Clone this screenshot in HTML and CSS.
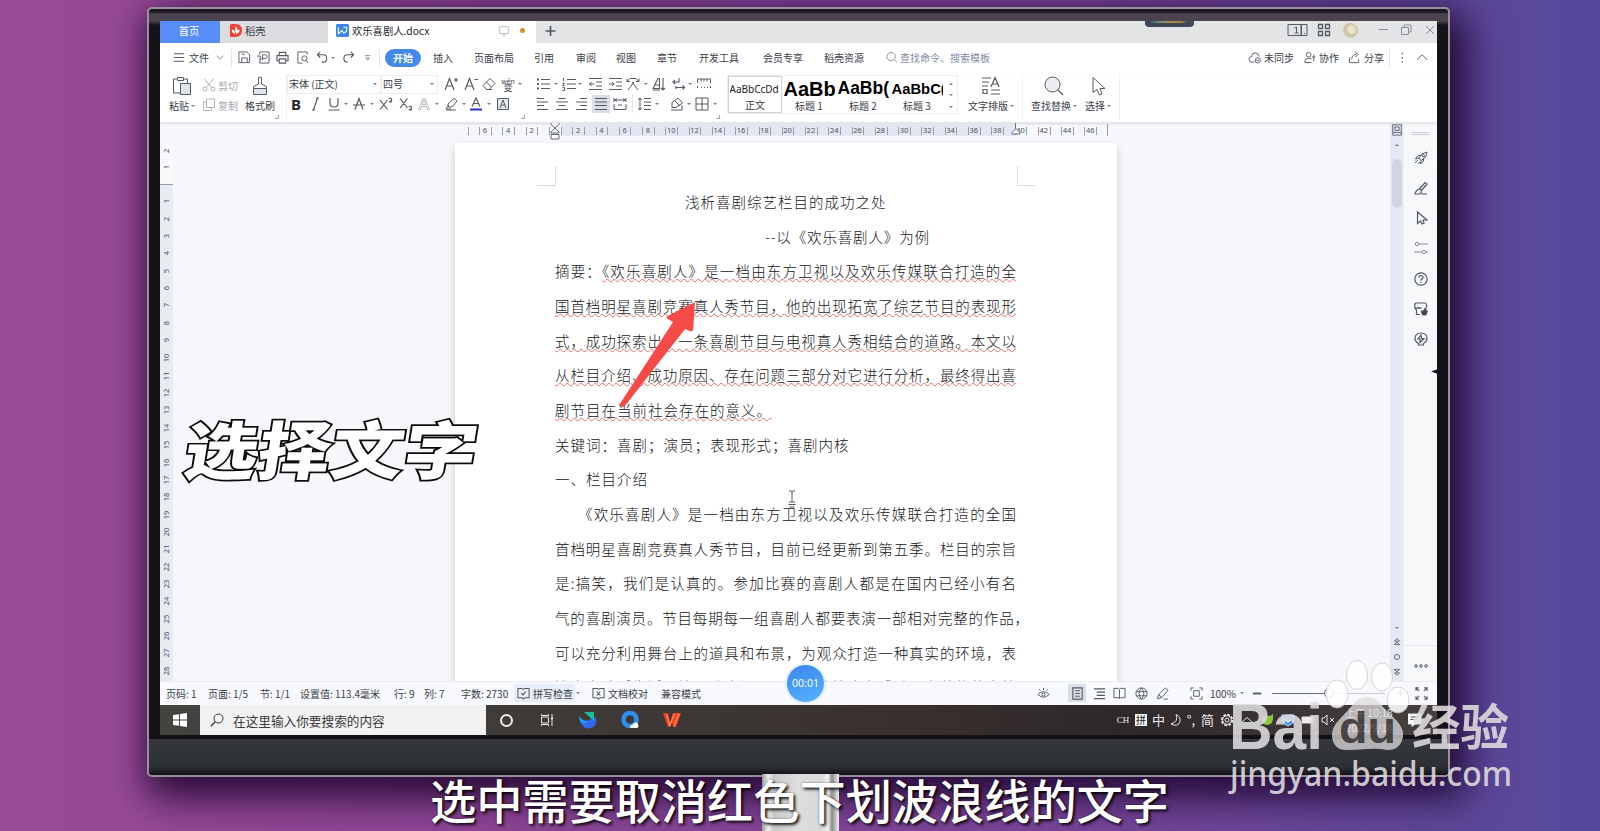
FILE: index.html
```html
<!DOCTYPE html>
<html lang="zh-CN">
<head>
    <meta charset="UTF-8">
    <meta name="viewport" content="width=device-width, initial-scale=1.0">
    <title>欢乐喜剧人.docx</title>
    <link rel="stylesheet" href="styles.css">
</head>
<body>
<div class="stage">
    <div class="stand"></div>

    <div class="monitor">
        <div class="screen">

            <!-- Tabs -->
            <div class="tabs">
                <div class="tab home">首页</div>
                <div class="tab docer">
                    <svg class="logo" viewBox="0 0 14 14"><path d="M1 2q0-2 2-2h4q7 0 7 7t-7 7H3q-2 0-2-2z" fill="#ee4138"/><path d="M7.500 2.500q3 3 0 6.500q-2-3 0-6.500zM3 6q3 0 4 4.500q-4 0-4-4.500zM11.500 6q0 4-4 4.500q0-4 4-4.500z" fill="#fff"/></svg>
                    <span>稻壳</span>
                </div>
                <div class="tab doc">
                    <svg class="logo" viewBox="0 0 14 14"><rect width="14" height="14" rx="1.500" fill="#3d86e8"/><path d="M2.500 3.500v7l4-3.500 2 3 3-2.500v-4H8" fill="none" stroke="#fff" stroke-width="1.100"/></svg>
                    <span>欢乐喜剧人.docx</span>
                    <svg class="i pale screen-ico" viewBox="0 0 14 14"><path d="M2 2h10v8H2zM5 13l2-2.500L9 13"/></svg>
                    <i class="dot"></i>
                </div>
                <svg class="i plus" viewBox="0 0 14 14"><path d="M7 2v10M2 7h10" stroke-width="1.700"/></svg>
                <div class="win-buttons">
                    <svg class="i wide" viewBox="0 0 20 14"><path d="M.500 1.500h13v11H.500zM14 1.500h5.500v11H14zM7 5l2-1v6M7 10h4M16.500 10.500h1"/></svg>
                    <svg class="i" viewBox="0 0 14 14"><path d="M1.500 1.500h4v4h-4zM8.500 1.500h4v4h-4zM1.500 8.500h4v4h-4zM8.500 8.500h4v4h-4z" stroke-width="1.300"/></svg>
                    <i class="avatar"></i>
                    <i class="sep"></i>
                    <svg class="i grey" viewBox="0 0 14 14"><path d="M3 6.500h9"/></svg>
                    <svg class="i grey" viewBox="0 0 14 14"><path d="M2.500 4.500h7v7h-7zM5 4.500v-2.500h7v7H9.500"/></svg>
                    <svg class="i grey" viewBox="0 0 14 14"><path d="M3 3l8 8M11 3l-8 8"/></svg>
                </div>
                <div class="recorder"></div>
            </div>

            <!-- Menu -->
            <div class="menu">
                <svg class="i" viewBox="0 0 14 14"><path d="M1 3h11M1 7h11M1 11h11" stroke-width="1.200"/></svg>
                <span>文件</span>
                <svg class="i grey" viewBox="0 0 14 14"><path d="M1 5l3.500 4L8 5"/></svg>
                <i class="sep"></i>
                <svg class="i" viewBox="0 0 14 14"><path d="M1 1h8.500l3 3v8.500H1zM4 12.500v-5h6v5M4 3.500h3.500"/></svg>
                <svg class="i" viewBox="0 0 14 14"><path d="M3 4V1h10v12H3v-3M6 10V4h3q2 0 2 2t-2 2H6M0 5.500h3.500v4M2 8l1.500 1.500L5 8"/></svg>
                <svg class="i" viewBox="0 0 14 14"><path d="M3.500 5V1.500h7V5M3 10.500H1V5h12v5.500h-2M3.500 8.500h7v4.500h-7z" stroke-width="1.200"/></svg>
                <svg class="i" viewBox="0 0 14 14"><path d="M12 4V1H2v12h5"/><circle cx="9" cy="8" r="2.800"/><path d="M10.800 10l2.400 3"/></svg>
                <svg class="i" viewBox="0 0 14 14"><path d="M4.500 1L1.500 4l3 3M1.500 4H8q3.500 0 3.500 4T8 12H6" stroke-width="1.200"/></svg>
                <i class="caret"></i>
                <svg class="i" viewBox="0 0 14 14"><path d="M9.500 1l3 3-3 3M12.500 4H6q-4 0-4 4t4 4" stroke-width="1.200"/></svg>
                <svg class="i grey" viewBox="0 0 14 14"><path d="M3 5h6M4 7.500h4l-2 2.500z"/></svg>
                <i class="sep"></i>
                <b class="pill">开始</b>
                <span>插入</span>
                <span>页面布局</span>
                <span>引用</span>
                <span>审阅</span>
                <span>视图</span>
                <span>章节</span>
                <span>开发工具</span>
                <span>会员专享</span>
                <span>稻壳资源</span>
                <svg class="i grey" viewBox="0 0 14 14"><circle cx="5.500" cy="6" r="4.500"/><path d="M9 9.500l3 3"/></svg>
                <span class="hint">查找命令、搜索模板</span>
                <svg class="i" viewBox="0 0 14 14"><path d="M7 12H4Q1 12 1 9t3-3q0-4 4-4 3.500 0 4 4"/><circle cx="10.500" cy="10" r="2.800"/><path d="M9 10h3"/></svg>
                <span>未同步</span>
                <svg class="i" viewBox="0 0 14 14"><circle cx="5" cy="4" r="2.500"/><path d="M8 12.500H1V11q0-3 4-3 1.500 0 3 .500M10.500 4v7M8.500 6.500h4"/></svg>
                <span>协作</span>
                <svg class="i" viewBox="0 0 14 14"><path d="M1.500 7v5.500h10V9M4 9q0-5 5-5.500M7.500 1L11 3.500 8 6.500"/></svg>
                <span>分享</span>
                <i class="sep"></i>
                <svg class="i" viewBox="0 0 14 14"><path d="M2.500 2v1.500M2.500 6.500V8M2.500 11v1.500" stroke-width="1.400"/></svg>
                <svg class="i" viewBox="0 0 14 14"><path d="M0 9.500L5.500 4 11 9.500"/></svg>
            </div>

            <!-- Ribbon -->
            <div class="ribbon">
                <div class="group clip">
                    <div class="big">
                        <svg viewBox="0 0 20 20"><path d="M5 3H1.500v14H8M12 3h3.500v4M5.500 1.500h6v3h-6z"/><path d="M8.500 7.500h10v11h-10z" fill="#dfe3eb"/></svg>
                        <span>粘贴<i class="caret"></i></span>
                    </div>
                    <div class="pair off">
                        <span><svg class="i" viewBox="0 0 14 14"><circle cx="3" cy="11" r="2"/><circle cx="11" cy="11" r="2"/><path d="M2.500 1l7 8.500M11.500 1l-7 8.500"/></svg>剪切</span>
                        <span><svg class="i" viewBox="0 0 14 14"><path d="M4.500 1h8v8.500h-8zM4.500 4H1.500v8.500h8V10"/></svg>复制</span>
                    </div>
                    <div class="big">
                        <svg viewBox="0 0 20 20"><path d="M8.500 8V1.500q1.500-1 3 0V8l5 2.500v2h-13v-2z"/><path d="M3.500 12.500h13v6h-13z" fill="#dfe3eb"/></svg>
                        <span>格式刷</span>
                    </div>
                    <i class="corner"></i>
                </div>

                <div class="group font">
                    <div class="row font-a">
                        <div class="select">宋体 (正文)<i class="caret"></i></div>
                        <div class="select">四号<i class="caret"></i></div>
                        <svg class="i" viewBox="0 0 14 14"><path d="M1 13L5.500 1.500 10 13M2.500 9h6M10 3h4M12 1v4" stroke-width="1.200"/></svg>
                        <svg class="i" viewBox="0 0 14 14"><path d="M1 13L5.500 1.500 10 13M2.500 9h6M10.500 2.500h3.500" stroke-width="1.200"/></svg>
                        <svg class="i" viewBox="0 0 14 14"><path d="M1 8.500L8 1.500l5 5-6 6H4.500zM4.500 5l5 5M4 12.500h6"/></svg>
                        <div class="pinyin"><small>wén</small>变</div>
                        <i class="caret"></i>
                    </div>
                    <div class="row font-b">
                        <b class="letter">B</b>
                        <svg class="i" viewBox="0 0 14 14"><path d="M8 1h3M4 13h3M9.500 1l-4 12" stroke-width="1.200"/></svg>
                        <svg class="i" viewBox="0 0 14 14"><path d="M3 1v5q0 4 4 4t4-4V1M1.500 13h11" stroke-width="1.200"/></svg>
                        <i class="caret"></i>
                        <svg class="i" viewBox="0 0 14 14"><path d="M3 12.500L7 1.500l4 11M1 8h12" stroke-width="1.200"/></svg>
                        <i class="caret"></i>
                        <svg class="i" viewBox="0 0 14 14"><path d="M1 3l7.500 9.500M8.500 3L1 12.500M10 2q1.500-1.500 2.500 0t-2.500 3h3" stroke-width="1.200"/></svg>
                        <svg class="i" viewBox="0 0 14 14"><path d="M1 1.500L8.500 11M8.500 1.500L1 11M10 10q1.500-1.500 2.500 0t-2.500 3h3" stroke-width="1.200"/></svg>
                        <svg class="i pale" viewBox="0 0 14 14"><path d="M1.500 12.500L6 1.500h2l4.500 11h-2l-1-3H4.500l-1 3zM5 7.500h4L7 3.500z"/></svg>
                        <i class="caret"></i>
                        <svg class="i" viewBox="0 0 14 14"><path d="M4 7l6-5.500L13 4 8 10H4.500zM4.500 8L2 12h5M2 13h10" /></svg>
                        <i class="caret"></i>
                        <svg class="i" viewBox="0 0 14 14"><path d="M3 9.500L7 1l4 8.500M4.500 6.500h5" stroke-width="1.200"/><path d="M1 12.500h12" stroke="#2b2fc4" stroke-width="2"/></svg>
                        <i class="caret"></i>
                        <svg class="i" viewBox="0 0 14 14"><path d="M1.500 1.500h11v11h-11z" fill="#e4e7ec"/><path d="M4 11l3-8 3 8M5 8h4"/></svg>
                    </div>
                    <i class="corner"></i>
                </div>

                <div class="group para">
                    <div class="row para-a">
                        <svg class="i" viewBox="0 0 14 14"><path d="M5 2.500h9M5 7h9M5 11.500h9"/><path d="M1 2.500h2M1 7h2M1 11.500h2" stroke-width="2"/></svg>
                        <i class="caret"></i>
                        <svg class="i" viewBox="0 0 14 14"><path d="M5 2.500h9M5 7h9M5 11.500h9M1.500 1v3M.500 6h2l-2 2.500h2M.500 10.500h2v3h-2"/></svg>
                        <i class="caret"></i>
                        <svg class="i" viewBox="0 0 14 14"><path d="M1 1.500h13M8 5h6M8 9h6M1 12.500h13M6.500 7H1M3.500 5l-2 2 2 2"/></svg>
                        <svg class="i" viewBox="0 0 14 14"><path d="M1 1.500h13M8 5h6M8 9h6M1 12.500h13M1 7h5.500M4 5l2 2-2 2"/></svg>
                        <svg class="i" viewBox="0 0 14 14"><path d="M2 13l6-8M12 13L6 5M1 1.500v3h3M1 4.500L4 1.500h6l3 3M13 1.500v3h-3"/></svg>
                        <i class="caret"></i>
                        <svg class="i" viewBox="0 0 14 14"><path d="M1 11.500L6 1.500h1.500v10zM3 8h4M1 13h7M11 1v12M9 11l2 2 2-2" stroke-width="1.100"/></svg>
                        <svg class="i" viewBox="0 0 14 14"><path d="M7 1v4H1M3 3L1 5l2 2M4 10.500h8.500M10.500 8.500l2 2-2 2M4 9v3" stroke-width="1.100"/></svg>
                        <i class="caret"></i>
                        <svg class="i" viewBox="0 0 14 14"><path d="M.500 6V2h13v4M4 2v2.500M7 2v2.500M10 2v2.500M.500 9v2M13.500 9v2M4 10.500h1M7 10.500h1M10 10.500h1"/></svg>
                    </div>
                    <div class="row para-b">
                        <svg class="i" viewBox="0 0 14 14"><path d="M1 1.500h7M1 5h11M1 8.500h7M1 12.500h11"/></svg>
                        <svg class="i" viewBox="0 0 14 14"><path d="M3.500 1.500h7M1 5h12M3.500 8.500h7M1 12.500h12"/></svg>
                        <svg class="i" viewBox="0 0 14 14"><path d="M6 1.500h7M2 5h11M6 8.500h7M2 12.500h11"/></svg>
                        <div class="on"><svg class="i" viewBox="0 0 14 14"><path d="M1 1.500h12M1 5h12M1 8.500h12M1 12.500h12" stroke-width="1.200"/></svg></div>
                        <svg class="i" viewBox="0 0 14 14"><path d="M1 1v4M13 1v4M1 3h12M4 1.500L2 3l2 1.500M10 1.500L12 3l-2 1.500M1 7v5.500h12V7M5 8h4"/></svg>
                        <i class="sep"></i>
                        <svg class="i" viewBox="0 0 14 14"><path d="M3 1v12M1 3l2-2 2 2M1 11l2 2 2-2M7 1.500h7M7 5h7M7 8.500h7M7 12.500h7"/></svg>
                        <i class="caret"></i>
                        <i></i>
                        <svg class="i" viewBox="0 0 14 14"><path d="M2 5.500L8 1l4.500 5L6 10.500H2zM12 8v4M1 13h12M5 4l5 5"/></svg>
                        <i class="caret"></i>
                        <svg class="i" viewBox="0 0 14 14"><path d="M1 1h12v12H1zM7 1v12M1 7h12"/></svg>
                        <i class="caret"></i>
                    </div>
                    <i class="corner"></i>
                </div>

                <div class="styles">
                    <div class="style current"><em>AaBbCcDd</em><span>正文</span></div>
                    <div class="style h1"><em>AaBb</em><span>标题 1</span></div>
                    <div class="style h2"><em>AaBb(</em><span>标题 2</span></div>
                    <div class="style h3"><em>AaBbC(</em><span>标题 3</span></div>
                    <div class="arrows"><i class="caret up"></i><i class="caret"></i><i class="caret more"></i></div>
                </div>

                <div class="group tools">
                    <div class="big">
                        <svg viewBox="0 0 20 20"><path d="M1 2h9M1 6h7M1 10h6M2 13.500h4v4H2zM10 14h9M10 18h9M10 11l4-9.500 4 9.500M11.500 8h5" stroke-width="1.200"/></svg>
                        <span>文字排版<i class="caret"></i></span>
                    </div>
                    <i class="sep tall"></i>
                    <div class="big">
                        <svg viewBox="0 0 20 20"><circle cx="8.500" cy="8.500" r="7.500" fill="#eceef3"/><path d="M14 14l5 5" stroke-width="1.300"/></svg>
                        <span>查找替换<i class="caret"></i></span>
                    </div>
                    <div class="big">
                        <svg viewBox="0 0 20 20"><path d="M5 1.500v15l4-3 2.500 5.500 2.500-1-2-5.500h5z"/></svg>
                        <span>选择<i class="caret"></i></span>
                    </div>
                    <i class="sep tall"></i>
                </div>
            </div>

            <!-- Document -->
            <div class="work">
                <div class="canvas">
                    <div class="hruler" id="hruler"></div>
                    <div class="vruler" id="vruler"></div>
                    <div class="page">
                        <div class="crop left"></div>
                        <div class="crop right"></div>
                        <p class="title">浅析喜剧综艺栏目的成功之处</p>
                        <p class="subtitle">--以《欢乐喜剧人》为例</p>
                        <p class="full">摘要：<u>《欢乐喜剧人》是一档由东方卫视以及欢乐传媒联合打造的全</u></p>
                        <p class="full"><u>国首档明星喜剧竞赛真人秀节目，他的出现拓宽了综艺节目的表现形</u></p>
                        <p class="full"><u>式，成功探索出了一条喜剧节目与电视真人秀相结合的道路。本文以</u></p>
                        <p class="full"><u>从栏目介绍、成功原因、存在问题三部分对它进行分析，最终得出喜</u></p>
                        <p><u>剧节目在当前社会存在的意义。</u></p>
                        <p>关键词：喜剧；演员；表现形式；喜剧内核</p>
                        <p>一、栏目介绍</p>
                        <p class="full indent">《欢乐喜剧人》是一档由东方卫视以及欢乐传媒联合打造的全国</p>
                        <p class="full">首档明星喜剧竞赛真人秀节目，目前已经更新到第五季。栏目的宗旨</p>
                        <p class="full">是:搞笑，我们是认真的。参加比赛的喜剧人都是在国内已经小有名</p>
                        <p class="full hang">气的喜剧演员。节目每期每一组喜剧人都要表演一部相对完整的作品，</p>
                        <p class="full">可以充分利用舞台上的道具和布景，为观众打造一种真实的环境，表</p>
                        <p class="full">演内容贴近生活，演员功底深厚，既有欢笑也有感动，完整的故事结</p>
                    </div>
                </div>
                <div class="scroll">
                    <svg class="i" viewBox="0 0 14 14"><path d="M2 1h10v12H2zM4.500 3.500h5v4h-5zM2 10h10"/></svg>
                    <i class="caret up"></i>
                    <div class="thumb"></div>
                    <div class="pager">
                        <i class="caret"></i>
                        <svg class="i" viewBox="0 0 14 14"><path d="M4 6l3-3 3 3zM4 10l3-3 3 3z"/></svg>
                        <svg class="i" viewBox="0 0 14 14"><circle cx="7" cy="7" r="3"/></svg>
                        <svg class="i" viewBox="0 0 14 14"><path d="M4 4l3 3 3-3zM4 8l3 3 3-3z"/></svg>
                    </div>
                </div>
                <div class="side">
                    <i class="grip"></i>
                    <svg class="i" viewBox="0 0 14 14"><path d="M5 7q2-5 8-6-.500 6-6 8.500zM5 7L1.500 7.500 4 4.500h2.500M7 9.500L6.500 13 9.500 10V7.500M4 9l-3 3M2 8.500l-1 1M5.500 11l-1 2"/><circle cx="9.300" cy="4.700" r="1.200"/></svg>
                    <svg class="i" viewBox="0 0 14 14"><path d="M5.500 8L11 1.500l2 1.500L7.500 9.500M5.500 8q-3 0-4.500 5h4.500q2-1 2-3.500zM7 13h6" stroke-width="1.200"/></svg>
                    <svg class="i" viewBox="0 0 14 14"><path d="M3.500 1v11.500l3-2.500L8 13l2-.800L9 9h4z" stroke-width="1.200"/></svg>
                    <svg class="i grey" viewBox="0 0 14 14"><circle cx="3" cy="3" r="1.700"/><circle cx="10" cy="11" r="1.700"/><path d="M4.700 3H14M0 11h8.300M11.700 11H14"/></svg>
                    <svg class="i" viewBox="0 0 14 14"><circle cx="7" cy="7" r="6.200" stroke-width="1.200"/><path d="M5 5.500q0-2 2-2t2 2q0 1.200-2 2.200v1M7 9.800v1.200" stroke-width="1.200"/></svg>
                    <svg class="i" viewBox="0 0 14 14"><path d="M6 12.500H2.500V8Q0 6.500 1 2q0-1 2-1h8q1.500 0 1.500 2v3M1 5.500q2 1.500 3.500 0 1.500 1.500 3 0" stroke-width="1.200"/><path d="M7 9q3 1 4-3 2 1 1 3h1.500L12 13H8.500z" fill="#444"/></svg>
                    <svg class="i" viewBox="0 0 14 14"><path d="M4.500 11.500Q1 9.500 1 6.500q0-5.500 6-5.500t6 5.500q0 3-3.500 5V13h-5zM7 3l-3 4h2v3.500L10 6.500H7.500z" stroke-width="1.200"/></svg>
                    <div class="more-tools"><svg class="i" viewBox="0 0 14 14"><circle cx="2" cy="7" r="1.300"/><circle cx="7" cy="7" r="1.300"/><circle cx="12" cy="7" r="1.300"/></svg></div>
                </div>
            </div>

            <!-- Status bar -->
            <div class="status">
                <span>页码: 1</span>
                <span>页面: 1/5</span>
                <span>节: 1/1</span>
                <span>设置值: 113.4毫米</span>
                <span>行: 9</span>
                <span>列: 7</span>
                <span>字数: 2730</span>
                <span class="check"><svg class="i" viewBox="0 0 14 14"><path d="M1 1.500h4.500L7 2.500l1.500-1H13v10H8.500L7 13l-1.500-1.500H1zM4.500 6.500l2 2 3-3.500" stroke-width="1.100"/></svg>拼写检查</span>
                <i class="caret"></i>
                <span class="proof"><svg class="i" viewBox="0 0 14 14"><path d="M1 1.500h4.500L7 2.500l1.500-1H13v10H8.500L7 13l-1.500-1.500H1zM5 5l4 4M9 5L5 9" stroke-width="1.100"/></svg>文档校对</span>
                <span>兼容模式</span>
                <svg class="i" viewBox="0 0 14 14"><path d="M1 8q6-6 12 0-6 6-12 0zM3.500 4L2.500 2.500M7 3V1M10.500 4l1-1.500"/><circle cx="7" cy="8" r="1.700"/></svg>
                <div class="on"><svg class="i" viewBox="0 0 14 14"><path d="M2 1h10v12H2zM4.500 4h5M4.500 7h5M4.500 10h5" stroke-width="1.200"/></svg></div>
                <svg class="i" viewBox="0 0 14 14"><path d="M1 2h12M4 5.500h9M4 9h9M1 12.500h12" stroke-width="1.200"/></svg>
                <svg class="i" viewBox="0 0 14 14"><path d="M1 1.500h5l1 1 1-1h5v10H8l-1 1-1-1H1zM7 2.500v10"/></svg>
                <svg class="i" viewBox="0 0 14 14"><circle cx="7" cy="7" r="6"/><path d="M1 5h12M1 9.500h12M7 1q-5 6 0 12M7 1q5 6 0 12"/></svg>
                <svg class="i" viewBox="0 0 14 14"><path d="M1.500 12.500L3 8l7-7 3 2.500-7 8zM3 8l3 3.500M8 13h5"/></svg>
                <svg class="i" viewBox="0 0 14 14"><path d="M1 4V1h3M10 1h3v3M13 10v3h-3M4 13H1v-3M4 4h6v6H4z"/></svg>
                <span>100%</span>
                <i class="caret"></i>
                <svg class="i" viewBox="0 0 14 14"><path d="M0 7h9" stroke-width="2"/></svg>
                <div class="slider"><i></i></div>
                <svg class="i" viewBox="0 0 14 14"><path d="M5 2v9M.500 6.500h9" stroke-width="1.200"/></svg>
                <svg class="i" viewBox="0 0 14 14"><path d="M1 4V1h3M1 1l3.500 3.500M10 1h3v3M13 1L9.500 4.500M13 10v3h-3M13 13L9.500 9.500M4 13H1v-3M1 13l3.500-3.500" stroke-width="1.200"/></svg>
            </div>

            <!-- Windows taskbar -->
            <div class="taskbar">
                <div class="start"><svg viewBox="0 0 14 14"><path d="M0 2l6-.800v5.300H0zM7 1.100L14 0v6.500H7zM0 7.500h6v5.300L0 12zM7 7.500h7V14L7 12.900z" fill="#fff"/></svg></div>
                <div class="search">
                    <svg class="i" viewBox="0 0 14 14"><circle cx="8.500" cy="5.500" r="4.500"/><path d="M5.200 8.700L.800 13.200" stroke-width="1.300"/></svg>
                    <span>在这里输入你要搜索的内容</span>
                </div>
                <div class="apps">
                    <i class="cortana"></i>
                    <svg class="i light" viewBox="0 0 14 14"><path d="M1.500 4h7v6h-7zM1.500 1v1.500h7V1M1.500 13v-1.500h7V13M12 1v12" /><path d="M11 5.500h2" stroke-width="2"/></svg>
                    <svg class="app" viewBox="0 0 18 18"><path d="M0 5q4 6 10 4l7-3q2 11-8 11.500Q1 17 0 5z" fill="#3267e8"/><path d="M5 1h10v9z" fill="#20b89c"/><path d="M0 5q4 6 9 5-4 5-8 0z" fill="#2a9df0"/></svg>
                    <svg class="app" viewBox="0 0 18 18"><circle cx="9" cy="8.500" r="6.500" fill="none" stroke="#2b8ff0" stroke-width="4.500"/><path d="M9 16.500q0-3 3-3 1-2.500 3.500-2 2 .500 1.800 3 .700 2-1.300 2.500H10q-1 0-1-.500z" fill="#fff"/></svg>
                    <svg class="app" viewBox="0 0 18 18"><path d="M0 2h5l2 9 3-9h8l-5 14h-3l-1-5-2 5H5z" fill="#f0452a"/><path d="M4 4l3 11 4-12M11 15l5-12" stroke="#ff9a5b" fill="none"/></svg>
                </div>
                <div class="tray">
                    <span class="ch">CH</span>
                    <span class="pin">拼</span>
                    <span>中</span>
                    <svg class="i light" viewBox="0 0 14 14"><path d="M7 1.500q3 7-5 9.500 7 3.500 9-2.500 1-5-4-7z"/></svg>
                    <span>°,</span>
                    <span>简</span>
                    <svg class="i light" viewBox="0 0 14 14"><circle cx="7" cy="7" r="2"/><circle cx="7" cy="7" r="5.300" stroke-width="1.800" stroke-dasharray="2.600 1.500"/><circle cx="7" cy="7" r="4.300"/></svg>
                    <svg class="i light" viewBox="0 0 14 14"><path d="M2 9l5-4.500L12 9"/></svg>
                    <svg class="i" viewBox="0 0 14 14"><path d="M1 7q0-4 5-4 4 0 6-2 1 10-5 11-6 0-6-5z" fill="#8ac43f" stroke="none"/></svg>
                    <svg class="i" viewBox="0 0 14 14"><path d="M1 2h12v5q-1 4-6 6-5-2-6-6z" fill="#3f8ef0" stroke="#cfe2ff"/><path d="M4 6l3 3 3-3" stroke="#fff" stroke-width="1.500"/></svg>
                    <svg class="i light" viewBox="0 0 14 14"><path d="M1 4h11v6H1z" fill="#eee"/><path d="M13.500 6v2"/></svg>
                    <svg class="i light" viewBox="0 0 14 14"><path d="M1 5h2l3-3v10L3 9H1zM9 5l4 4M13 5L9 9"/></svg>
                    <div class="clock">上午 10:18<br>2022/9/14</div>
                    <svg class="i light note" viewBox="0 0 14 14"><path d="M0 1h13v10H7l-3 2.500V11H0z" fill="#fff"/><path d="M2.500 4h8M2.500 6.500h6" stroke="#444"/></svg>
                </div>
            </div>
        </div>
        <div class="chin"></div>
    </div>

    <!-- Things floating over the monitor -->
    <svg class="arrow" viewBox="0 0 80 110"><path d="M76 2L48 16.500q-1 1 0 2L54 22 0.500 104.500q2 3.500 5 2L66 29l6 2.500q2 0 2.200-2z" fill="#f54a45"/></svg>
    <svg class="ibeam" viewBox="0 0 10 18"><path d="M2 1h2.500l.500.500.500-.500H8M5 1.500v10M2 12h6M1.500 14.500h7M2.500 17h5" fill="none" stroke="#555"/></svg>
    <div class="timer">00:01</div>
    <svg class="edge-mark" viewBox="0 0 8 6"><path d="M0 3l8-3v6z" fill="#16121a"/></svg>
    <div class="callout">选择文字</div>
    <div class="caption">选中需要取消红色下划波浪线的文字</div>

    <svg class="watermark" viewBox="0 0 300 150">
        <g class="paw">
            <ellipse cx="121" cy="34" rx="11" ry="14"/>
            <ellipse cx="141" cy="15" rx="10.500" ry="14.500"/>
            <ellipse cx="166" cy="17" rx="10.500" ry="14"/>
            <ellipse cx="182" cy="40" rx="11" ry="13"/>
        </g>
        <path class="pad" d="M151 37q10 0 16 10l14 14q7 8 6 16-3 13-15 13-11-2-21-1t-21 1q-12 0-14-13-1-8 6-16l13-14q6-10 16-10z"/>
        <text x="13" y="89" class="wm-bai" textLength="94" lengthAdjust="spacingAndGlyphs">Bai</text>
        <text x="123" y="83" class="wm-du" textLength="57" lengthAdjust="spacingAndGlyphs">du</text>
        <text x="196" y="85" class="wm-cn" textLength="97" lengthAdjust="spacingAndGlyphs">经验</text>
        <text x="14" y="126" class="wm-url" textLength="282" lengthAdjust="spacingAndGlyphs">jingyan.baidu.com</text>
    </svg>
</div>

<script>
    // horizontal ruler: one cell per tick, every other cell has a number
    const hruler = document.getElementById('hruler');
    for (let i = 0; i < 55; i++) {
        const cell = document.createElement('span');
        if (i % 2 === 1 && i !== 7) {
            cell.textContent = Math.abs(i - 7);
        }
        if (i > 7 && i < 47) {
            cell.className = 'inside';
        }
        hruler.appendChild(cell);
    }
    const marks = '<svg class="stop" viewBox="0 0 10 18"><path d="M1 .500h8v2L5 6 1 2.500zM5 6l4 4v1H1v-1zM1 12.500h8v4.500H1z"/></svg>' +
        '<svg class="stop end" viewBox="0 0 10 18"><path d="M4.500 1v5M5 6.500l4 4v1.500H1v-1.500z"/></svg>';
    hruler.insertAdjacentHTML('beforeend', marks);

    // vertical ruler: 2 1 above the margin, then 1..28
    const vruler = document.getElementById('vruler');
    for (let i = -2; i <= 28; i++) {
        const cell = document.createElement('span');
        cell.textContent = i === 0 ? '' : Math.abs(i);
        cell.className = i < 0 ? 'margin' : (i === 0 ? 'zero' : '');
        vruler.appendChild(cell);
    }
</script>
</body>
</html>
```
FILE: styles.css
```css
* {
    box-sizing: border-box;
}
body {
    margin: 0;
    overflow: hidden;
    font-family: "Noto Sans CJK SC", sans-serif;
    font-size: 10px;
    color: #3c4049;
}
svg {
    display: block;
}
.stage {
    position: relative;
    width: 1600px;
    height: 831px;
    overflow: hidden;
    padding: 7px 0 0 147px;
    background: linear-gradient(90deg, #984a97 0%, #8f4696 30%, #7b459a 65%, #5f4899 90%, #54499c 100%);
}
.stand {
    position: absolute;
    left: 762px;
    top: 774px;
    width: 77px;
    height: 60px;
    background: linear-gradient(90deg, #999 0, #eee 6px, #c9c9cb 12px, #dededf 35px, #d8d8da 60px, #f2f2f2 66px, #8c8c8e 70px, #e5e5e5 76px);
    z-index: 1;
}
.monitor {
    position: relative;
    width: 1303px;
    height: 770px;
    padding: 12px 11px 0 11px;
    border: 2px solid #98909f;
    border-radius: 5px;
    background: linear-gradient(180deg, #1c1b21 0, #1c1b21 3px, #4b4450 5px, #4b4450 12px, #141318 16px, #141116 100%);
    box-shadow: 12px 14px 40px 6px rgba(28, 4, 44, .8), 0 10px 26px 4px rgba(28, 4, 44, .35);
}
.screen {
    width: 1277px;
    height: 714px;
    display: flex;
    flex-direction: column;
    background: #fff;
    overflow: hidden;
}
.chin {
    height: 35px;
    margin: 4px -11px 0;
    background: linear-gradient(180deg, #35383e, #2c2f34 80%, #17181b);
}

/* icons */
.i {
    width: 14px;
    height: 14px;
    fill: none;
    stroke: #555a64;
    stroke-width: 1;
    flex: none;
}
.i.grey {
    stroke: #8a8e98;
}
.i.pale {
    stroke: #b5b8bf;
}
.i.light {
    stroke: #e8e8e8;
}
.caret {
    display: inline-block;
    width: 0;
    height: 0;
    border: 2px solid transparent;
    border-top: 2.5px solid #777c87;
    border-bottom: 0;
}
.caret.up {
    border-top: 0;
    border-bottom: 2.5px solid #777c87;
}
.sep {
    width: 1px;
    height: 18px;
    background: #e3e5e9;
}
.corner {
    position: absolute;
    right: 4px;
    bottom: 3px;
    width: 4px;
    height: 4px;
    border-right: 1px solid #a5a8ae;
    border-bottom: 1px solid #a5a8ae;
}

/* tabs */
.tabs {
    position: relative;
    display: flex;
    align-items: center;
    height: 22px;
    flex: none;
    background: #e2e4e6;
}
.tab {
    display: flex;
    align-items: center;
    height: 22px;
    padding-bottom: 3px;
    font-size: 10.3px;
}
.logo {
    width: 13px;
    height: 13px;
    margin-right: 3px;
}
.tab.home {
    width: 60px;
    justify-content: center;
    padding-right: 2px;
    background: #568df8;
    color: #fff;
}
.tab.docer {
    width: 108px;
    padding-left: 9px;
    background: #dcdde1;
}
.tab.doc {
    width: 208px;
    padding-left: 8px;
    background: #fff;
    color: #22252b;
}
.screen-ico {
    width: 12px;
    margin-left: auto;
}
.dot {
    width: 5px;
    height: 5px;
    margin: 0 11px 0 10px;
    border-radius: 50%;
    background: #cf9030;
}
.plus {
    margin: 0 0 3px 7px;
    width: 15px;
}
.win-buttons {
    margin-left: auto;
    width: 150px;
    padding-bottom: 4px;
    display: grid;
    grid-template-columns: 30px 25px 26px 8px 23px 24px 14px;
    align-items: center;
}
.win-buttons .wide {
    width: 21px;
}
.avatar {
    width: 16px;
    height: 15px;
    border-radius: 50%;
    background: radial-gradient(circle at 60% 45%, #efe6d2 20%, #c9bf9f 50%, #e8e6df 80%);
}
.recorder {
    position: absolute;
    left: 985px;
    top: 0;
    width: 49px;
    height: 6px;
    border-radius: 0 0 4px 4px;
    background: linear-gradient(90deg, #3f4a5c 10%, #5a8a8f 25%, #b08a45 50%, #a87c42 75%, #3f4a5c 85%);
    border-bottom: 4px solid #3f4759;
}

/* menu */
.menu {
    display: grid;
    grid-template-columns: 16px 27px 15px 7px 19px 19px 20px 20px 15px 11px 20px 17px 6px 48px 41px 60px 42px 40px 41px 42px 64px 61px 62px 14px 348px 16px 40px 15px 29px 16px 25px 11px 17px 14px;
    align-items: center;
    height: 31px;
    flex: none;
    padding-left: 13px;
    padding-bottom: 2px;
    white-space: nowrap;
}
.menu .i {
    width: 13px;
    height: 13px;
}
.pill {
    width: 36px;
    height: 18px;
    line-height: 17px;
    border-radius: 9px;
    text-align: center;
    background: #4589ea;
    color: #fff;
}
.hint {
    color: #7f8aa3;
}

/* ribbon */
.ribbon {
    display: flex;
    height: 49px;
    flex: none;
    padding-left: 6px;
    border-bottom: 1px solid #e4e6ea;
    box-shadow: 0 1px 2px rgba(60, 70, 90, .12);
    position: relative;
}
.group {
    position: relative;
    display: flex;
}
.big {
    display: flex;
    flex-direction: column;
    align-items: center;
    white-space: nowrap;
}
.big svg {
    width: 20px;
    height: 20px;
    margin: 2px 0 2px;
    fill: none;
    stroke: #555a64;
}
.big span {
    display: flex;
    align-items: center;
    gap: 2px;
    line-height: 15px;
}
.clip {
    width: 116px;
    display: grid;
    grid-template-columns: 32px 45px 34px;
}
.clip .corner {
    right: 3px;
}
.pair {
    padding: 1px 0 0 4px;
}
.pair span {
    display: flex;
    align-items: center;
    gap: 2px;
    height: 20px;
}
.off {
    color: #a4a7ae;
}
.off .i {
    stroke: #b0b3ba;
}
.row {
    display: grid;
    align-items: center;
    justify-items: center;
    height: 20px;
}
.font {
    flex-direction: column;
    width: 243px;
    margin-left: 4px;
    border-left: 1px solid #eef0f2;
}
.font-a {
    grid-template-columns: 94px 57px 25px 15px 22px 16px 8px;
}
.font-b {
    grid-template-columns: 18px 20px 17px 7px 20px 6px 21px 19px 18px 7px 21px 5px 20px 6px 22px;
}
.select {
    display: flex;
    align-items: center;
    justify-content: space-between;
    width: 100%;
    height: 19px;
    padding: 0 3px 1px 1px;
    border: 1px solid #eceef1;
}
.letter {
    font: bold 15px/18px "Noto Sans", sans-serif;
    color: #23262d;
}
.pinyin {
    font-size: 9px;
    line-height: 7px;
    text-align: center;
}
.pinyin small {
    display: block;
    font-size: 7px;
    line-height: 6px;
}
.para {
    flex-direction: column;
    width: 191px;
    margin-left: 4px;
}
.para-a {
    grid-template-columns: 19px 8px 17px 6px 23px 17px 20px 5px 22px 17px 6px 22px;
    justify-content: start;
}
.para-b {
    grid-template-columns: 19px 19px 20px 19px 20px 4px 20px 6px 8px 18px 6px 20px 6px;
    justify-content: start;
}
.row .i {
    width: 14px;
    height: 14px;
}
.on {
    display: flex;
    align-items: center;
    justify-content: center;
    width: 18px;
    height: 18px;
    background: #d9dee7;
}
.styles {
    display: grid;
    grid-template-columns: 54px 54px 54px 54px 14px;
    width: 231px;
    height: 39px;
    margin-top: 1px;
    margin-left: 3px;
    border: 1px solid #eceef1;
    flex: none;
}
.style {
    display: flex;
    flex-direction: column;
    align-items: center;
    overflow: hidden;
}
.style em {
    font: 10px/24px "Noto Sans", "Noto Sans CJK SC", sans-serif;
    height: 23px;
    width: 51px;
    overflow: hidden;
    white-space: nowrap;
    color: #222;
}
.style span {
    line-height: 14px;
}
.style.current {
    border: 1px solid #cfd3da;
}
.style.h1 em {
    font: bold 20px/26px "Liberation Sans", sans-serif;
    color: #000;
}
.style.h2 em {
    font: bold 17.500px/25px "Liberation Sans", sans-serif;
    color: #000;
}
.style.h3 em {
    font: bold 14.800px/26px "Liberation Sans", sans-serif;
    color: #000;
}
.arrows {
    display: flex;
    flex-direction: column;
    align-items: center;
    justify-content: space-around;
    padding-top: 2px;
}
.caret.more {
    box-shadow: 0 -3px 0 -1px #777c87;
}
.tools {
    padding-left: 10px;
}
.tools .big {
    margin-right: 8px;
}
.tools .sep.tall {
    height: 46px;
    margin-right: 8px;
    background: #eff1f4;
}

/* work area */
.work {
    display: flex;
    flex: 1;
    min-height: 0;
    background: #f5f7fa;
}
.canvas {
    display: grid;
    grid-template: 20px 1fr / 295px 1fr;
    width: 1230px;
    height: 558px;
    overflow: hidden;
}
.hruler {
    grid-column: 1 / 3;
    position: relative;
    display: flex;
    height: 14px;
    margin-left: 307.500px;
    padding-top: 1px;
}
.hruler span {
    width: 11.650px;
    flex: none;
    height: 12px;
    font: 7.500px/12px "Noto Sans", sans-serif;
    text-align: center;
    color: #4d515b;
    background: linear-gradient(#9a9ea8, #9a9ea8) left 3px / 1px 8px no-repeat;
}
.hruler .inside {
    background-color: #e3e7f1;
}
.hruler span:nth-child(55) {
    border-right: 1px solid #9a9ea8;
}
.stop {
    position: absolute;
    left: 82px;
    top: -1px;
    width: 10px;
    height: 18px;
    fill: #fff;
    stroke: #666b76;
}
.stop.end {
    left: 543px;
}
.vruler {
    width: 13px;
    height: 538px;
    overflow: hidden;
    background: #e9ebf3;
}
.vruler span {
    display: block;
    width: 13px;
    height: 17.350px;
    writing-mode: vertical-rl;
    transform: rotate(180deg);
    text-align: center;
    font: 7.500px/13px "Noto Sans", sans-serif;
    color: #4d515b;
}
.vruler .margin {
    background: #f8f9fb;
}
.vruler .margin:first-child {
    height: 16px;
}
.vruler .zero {
    height: 17px;
    background: linear-gradient(180deg, #e9ebf3 8px, #9a9ea8 8px, #9a9ea8 9px, #f8f9fb 9px);
}
.page {
    position: relative;
    width: 662px;
    height: 560px;
    padding: 42px 101px 0 100px;
    background: #fff;
    box-shadow: 0 6px 8px rgba(50, 60, 80, .22);
    font-family: "Noto Sans CJK SC", sans-serif;
    font-weight: 300;
    font-size: 14.500px;
    color: #161618;
}
.page p {
    margin: 0;
    height: 34.670px;
    line-height: 34.670px;
    letter-spacing: 1px;
    white-space: nowrap;
}
.page .title {
    padding-left: 130px;
}
.page .subtitle {
    padding-left: 210px;
    letter-spacing: .85px;
}
.page .full {
    width: 461px;
    letter-spacing: 0;
    text-align: justify;
    text-align-last: justify;
    white-space: normal;
}
.page .indent {
    padding-left: 23px;
}
.page .hang {
    width: 474px;
}
.page u {
    text-decoration: underline wavy #d8706c 0.6px;
    text-underline-offset: 1px;
    text-decoration-skip-ink: none;
}
.crop {
    position: absolute;
    top: 23px;
    width: 19px;
    height: 20px;
    border-bottom: 1px solid #dcdcde;
}
.crop.left {
    left: 82px;
    border-right: 1px solid #dcdcde;
}
.crop.right {
    left: 562px;
    border-left: 1px solid #dcdcde;
}
.scroll {
    display: flex;
    flex-direction: column;
    align-items: center;
    width: 13px;
    height: 558px;
    background: #e6e9f1;
    padding-top: 1px;
}
.scroll .i {
    width: 12px;
    height: 12px;
}
.scroll .caret.up {
    margin-top: 8px;
}
.thumb {
    width: 10px;
    height: 49px;
    margin-top: 13px;
    border-radius: 5px;
    background: #d2d5dd;
}
.pager {
    display: flex;
    flex-direction: column;
    align-items: center;
    gap: 3px;
    margin-top: auto;
    margin-bottom: 3px;
}
.pager .caret {
    margin-bottom: 4px;
}
.side {
    display: flex;
    flex-direction: column;
    align-items: center;
    width: 34px;
    height: 558px;
    background: #f6f8fa;
    border-left: 1px solid #eceef2;
}
.side .i {
    margin-bottom: 16.150px;
}
.grip {
    width: 17px;
    height: 3px;
    margin: 9px 0 16px;
    border-top: 1px solid #c9ccd2;
    border-bottom: 1px solid #c9ccd2;
}
.more-tools {
    width: 100%;
    height: 36px;
    margin-top: auto;
    padding: 13px 0 0 10px;
    border-top: 1px solid #e4e7ec;
}

/* status bar */
.status {
    display: grid;
    grid-template-columns: 42px 52px 40px 94px 30px 37px 53px 61px 17px 69px 376px 31px 25px 20px 22px 21px 34px 20px 29px 14px 19px 124px 19px 14px;
    align-items: center;
    height: 24px;
    flex: none;
    padding-left: 6px;
    padding-bottom: 1px;
    background: #f7f9fc;
    border-top: 1px solid #e7eaf0;
    white-space: nowrap;
}
.check,
.proof {
    display: flex;
    align-items: center;
    gap: 3px;
    height: 18px;
}
.check {
    padding-left: 3px;
    background: #e7eef9;
}
.status .caret {
    margin-left: 1px;
}
.status .i {
    width: 13px;
    height: 13px;
}
.slider {
    position: relative;
    height: 1px;
    width: 113px;
    background: linear-gradient(90deg, #6a6e78 53px, #c9ccd2 63px);
}
.slider i {
    position: absolute;
    left: 52px;
    top: -5px;
    width: 10px;
    height: 10px;
    border: 1px solid #6a6e78;
    border-radius: 50%;
    background: #fff;
}

/* taskbar */
.taskbar {
    display: flex;
    height: 30px;
    flex: none;
    background: linear-gradient(90deg, #43433f 0%, #3d3835 40%, #392f2e 60%, #2d2829 75%, #45413f 100%);
}
.start {
    display: flex;
    align-items: center;
    justify-content: center;
    width: 40px;
}
.start svg {
    width: 14px;
    height: 14px;
}
.search {
    display: flex;
    align-items: center;
    gap: 9px;
    width: 286px;
    padding-left: 10px;
    background: #f1f1f1;
    font-size: 12.650px;
    color: #3a3a3a;
}
.search .i {
    stroke: #333;
}
.apps {
    display: grid;
    grid-template-columns: 41px 40px 41px 43px 41px;
    align-items: center;
    justify-items: center;
}
.cortana {
    width: 13px;
    height: 13px;
    border: 2px solid #ececec;
    border-radius: 50%;
}
.app {
    width: 20px;
    height: 18px;
}
.tray {
    display: grid;
    grid-template-columns: 18px 18px 17px 17px 14px 19px 19px 22px 20px 20px 20px 20px 62px 30px;
    align-items: center;
    justify-items: center;
    margin-left: auto;
    margin-right: 7px;
    padding-bottom: 2px;
    color: #efefef;
    font-size: 13px;
    line-height: 26px;
}
.ch {
    font: 9px "Liberation Serif", serif;
}
.pin {
    width: 12px;
    height: 12px;
    line-height: 12px;
    text-align: center;
    font-size: 10px;
    background: #f4f4f4;
    color: #222;
}
.clock {
    font-size: 10px;
    line-height: 15px;
    text-align: center;
    white-space: nowrap;
}

/* overlays */
.arrow {
    position: absolute;
    left: 619px;
    top: 300px;
    width: 80px;
    height: 110px;
}
.ibeam {
    position: absolute;
    left: 787px;
    top: 490px;
    width: 10px;
    height: 18px;
}
.edge-mark {
    position: absolute;
    left: 1431px;
    top: 369px;
    width: 7px;
    height: 5px;
}
.timer {
    position: absolute;
    left: 786px;
    top: 664px;
    width: 39px;
    height: 39px;
    border: 1.500px solid #e3f1fd;
    border-radius: 50%;
    background: linear-gradient(160deg, #3b86ea, #4ba0fa 60%, #5cb6fb);
    box-shadow: 0 0 2px #b8d8f8;
    color: #fff;
    font: 10.500px/37px "Noto Sans", sans-serif;
    text-align: center;
}
.callout {
    position: absolute;
    left: 186px;
    top: 393px;
    font-size: 73px;
    font-weight: 900;
    line-height: 106px;
    color: #fff;
    -webkit-text-stroke: 4px #0c0c0c;
    paint-order: stroke fill;
    transform: skewX(-9deg) scaleY(.86);
}
.caption {
    position: absolute;
    left: 430px;
    top: 766px;
    z-index: 2;
    font-size: 46.200px;
    font-weight: 500;
    line-height: 66px;
    white-space: nowrap;
    color: #fff;
    text-shadow: 2px 2px 3px rgba(0, 0, 0, .85), 0 0 2px rgba(0, 0, 0, .5);
}
.watermark {
    position: absolute;
    left: 1216px;
    top: 660px;
    width: 300px;
    height: 150px;
    z-index: 3;
    overflow: visible;
    fill: #e0dde0;
    opacity: .88;
}
.paw {
    fill: #fff;
    stroke: #c4c4c6;
    stroke-width: .8;
}
.pad {
    fill: #e0dde0;
    opacity: .85;
}
.wm-bai {
    font: bold 64px "Liberation Sans", sans-serif;
}
.wm-du {
    font: bold 44px "Liberation Sans", sans-serif;
    fill: #4a4746;
}
.wm-cn {
    font: bold 49px "Noto Sans CJK SC", sans-serif;
}
.wm-url {
    font: 500 34px "Noto Sans", sans-serif;
}
```
